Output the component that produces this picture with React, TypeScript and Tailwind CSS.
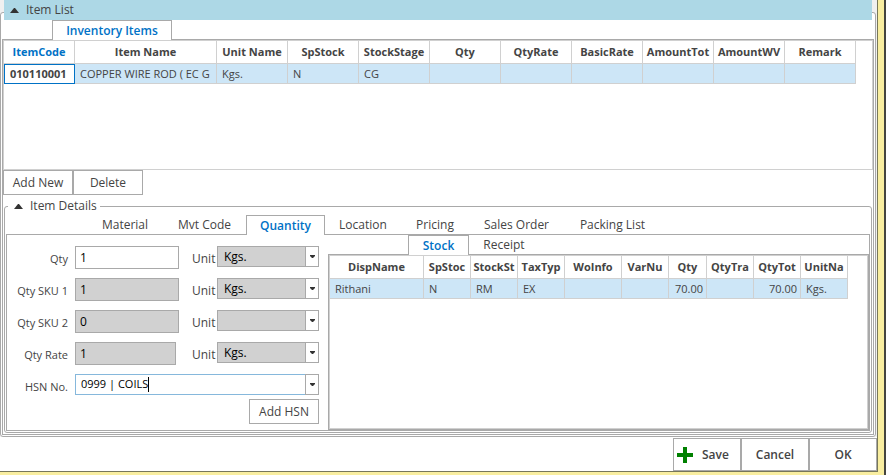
import React from 'react';

type Column = { name: string; width: string; align?: string };

const itemColumns: Column[] = [
  { name: 'ItemCode', width: 'w-[71px]' },
  { name: 'Item Name', width: 'w-[142px]' },
  { name: 'Unit Name', width: 'w-[71px]' },
  { name: 'SpStock', width: 'w-[71px]' },
  { name: 'StockStage', width: 'w-[71px]' },
  { name: 'Qty', width: 'w-[71px]' },
  { name: 'QtyRate', width: 'w-[71px]' },
  { name: 'BasicRate', width: 'w-[71px]' },
  { name: 'AmountTot', width: 'w-[71px]' },
  { name: 'AmountWV', width: 'w-[71px]' },
  { name: 'Remark', width: 'w-[71px]' },
];

const itemRow = ['010110001', 'COPPER WIRE ROD ( EC G', 'Kgs.', 'N', 'CG', '', '', '', '', '', ''];

const stockColumns: Column[] = [
  { name: 'DispName', width: 'w-[94px]' },
  { name: 'SpStoc', width: 'w-[47px]' },
  { name: 'StockSt', width: 'w-[47px]' },
  { name: 'TaxTyp', width: 'w-[47px]' },
  { name: 'WoInfo', width: 'w-[57px]' },
  { name: 'VarNu', width: 'w-[47px]' },
  { name: 'Qty', width: 'w-[38px]', align: 'text-right' },
  { name: 'QtyTra', width: 'w-[47px]' },
  { name: 'QtyTot', width: 'w-[47px]', align: 'text-right' },
  { name: 'UnitNa', width: 'w-[47px]' },
];

const stockRow = ['Rithani', 'N', 'RM', 'EX', '', '', '70.00', '', '70.00', 'Kgs.'];

const detailTabs = [
  { name: 'Material', width: 'w-[76px]' },
  { name: 'Mvt Code', width: 'w-[83px]' },
  { name: 'Quantity', width: 'w-[79px]' },
  { name: 'Location', width: 'w-[76px]' },
  { name: 'Pricing', width: 'w-[68px]' },
  { name: 'Sales Order', width: 'w-[95px]' },
  { name: 'Packing List', width: 'w-[97px]' },
];

const quantityRows = [
  { id: 'qty', label: 'Qty', value: '1', unit: 'Kgs.', input: 'w-[104px] bg-white' },
  { id: 'sku1', label: 'Qty SKU 1', value: '1', unit: 'Kgs.', input: 'w-[104px] bg-[#d1d1d1]' },
  { id: 'sku2', label: 'Qty SKU 2', value: '0', unit: '', input: 'w-[104px] bg-[#d1d1d1]' },
  { id: 'rate', label: 'Qty Rate', value: '1', unit: 'Kgs.', input: 'w-[101px] bg-[#d1d1d1]' },
];

function Expander({ title }: { title: string }) {
  return (
    <button type="button" className="flex items-center gap-[7px] whitespace-nowrap">
      <svg width="9" height="5" viewBox="0 0 9 5" aria-hidden="true">
        <path d="M4 0h1l4 5H0z" fill="#333" />
      </svg>
      {title}
    </button>
  );
}

function Tab({ name, width, active }: { name: string; width: string; active?: boolean }) {
  return (
    <button
      type="button"
      role="tab"
      aria-selected={!!active}
      className={`h-5 shrink-0 whitespace-nowrap text-center ${width} ${
        active ? 'relative border border-b-0 border-[#a9a9a9] bg-white font-semibold text-[#0072c6]' : 'text-[#444]'
      }`}
    >
      {name}
    </button>
  );
}

function Grid({ columns, row, focusFirst }: { columns: Column[]; row: string[]; focusFirst?: boolean }) {
  return (
    <table className="w-px table-fixed border-separate border-spacing-0 text-[11px]">
      <thead>
        <tr className="h-[23px]">
          {columns.map((c, i) => (
            <th
              key={c.name}
              className={`overflow-hidden whitespace-nowrap border-r border-b border-[#d0d0d0] p-0 text-center font-bold ${c.width} ${
                focusFirst && i === 0 ? 'text-[#0072c6]' : ''
              }`}
            >
              {c.name}
            </th>
          ))}
        </tr>
      </thead>
      <tbody>
        <tr className="h-5">
          {row.map((value, i) => (
            <td
              key={columns[i].name}
              className={`overflow-hidden whitespace-nowrap border-r border-b border-[#d0d0d0] p-0 leading-4 ${columns[i].align ?? ''} ${
                focusFirst && i === 0
                  ? 'bg-white pl-[6px] font-bold outline-1 -outline-offset-1 outline-[#0072c6]'
                  : 'bg-[#cde6f7] pl-[5px]'
              } ${columns[i].align ? 'pr-[3px]' : ''}`}
            >
              {value}
            </td>
          ))}
        </tr>
      </tbody>
    </table>
  );
}

function DropArrow() {
  return (
    <svg width="5" height="3" viewBox="0 0 5 3" aria-hidden="true">
      <path d="M0 0h5v1L3 3H2L0 1z" fill="#333" />
    </svg>
  );
}

function UnitSelect({ id, value }: { id: string; value: string }) {
  return (
    <div className="relative h-[21px] w-[102px] shrink-0">
      <select
        id={id}
        defaultValue={value}
        className="h-full w-full appearance-none border border-[#a9a9a9] bg-[#d1d1d1] pl-[6px] text-black outline-none"
      >
        <option value={value}>{value}</option>
      </select>
      <span className="pointer-events-none absolute inset-y-0 right-0 flex w-[14px] items-center justify-center border border-[#a9a9a9] bg-white">
        <DropArrow />
      </span>
    </div>
  );
}

function QuantityForm() {
  return (
    <form className="w-[321px] shrink-0 pt-[11px] pr-[9px] pb-[6px]">
      {quantityRows.map((r) => (
        <div key={r.id} className="flex h-8 items-start">
          <label htmlFor={r.id} className="w-[68px] shrink-0 pt-[5px] pr-[7px] text-right text-[11px]">
            {r.label}
          </label>
          <input
            id={r.id}
            defaultValue={r.value}
            className={`h-[23px] border border-[#a9a9a9] px-1 text-black outline-none ${r.input}`}
          />
          <label htmlFor={`${r.id}-unit`} className="ml-auto w-[25px] pt-[5px]">
            Unit
          </label>
          <UnitSelect id={`${r.id}-unit`} value={r.unit} />
        </div>
      ))}
      <div className="flex items-start">
        <label htmlFor="hsn" className="w-[68px] shrink-0 pt-[5px] pr-[7px] text-right text-[11px]">
          HSN No.
        </label>
        <div className="flex h-[21px] flex-1">
          <div className="flex flex-1 items-center border border-r-0 border-[#86b8dc] pb-px pl-[5px]">
            <input id="hsn" defaultValue="0999 | COILS" className="field-sizing-content text-[11px] text-black outline-none" />
            <span className="h-[15px] w-px bg-black" />
          </div>
          <button
            type="button"
            aria-label="Show HSN numbers"
            className="flex w-[14px] items-center justify-center border border-[#a9a9a9]"
          >
            <DropArrow />
          </button>
        </div>
      </div>
      <div className="mt-1 flex justify-end">
        <button type="button" className="h-[25px] w-[70px] border border-[#a9a9a9]">
          Add HSN
        </button>
      </div>
    </form>
  );
}

export default function App() {
  return (
    <div className="flex min-h-screen flex-col border-r-2 border-[#45453f] bg-[#f9eea0] pr-[6px] pb-[3px] font-['Open_Sans','Noto_Sans',sans-serif] text-[12px] leading-4 text-[#444]">
      <main className="flex flex-1 flex-col border-r border-b border-[#77775a] bg-white">
        <div className="flex flex-1 flex-col bg-[#f0f0f0] pt-3 pr-px">
          <section className="flex flex-1 flex-col rounded-[3px] border border-[#a9a9a9] bg-white">
            <header className="relative mx-[3px] -mt-[13px] flex h-5 items-center bg-[#add8e6] pl-[6px]">
              <Expander title="Item List" />
            </header>
            <div role="tablist" className="-mb-px flex pl-[51px]">
              <Tab name="Inventory Items" width="w-[120px]" active />
            </div>
            <div className="m-px mt-0 flex flex-1 flex-col border border-[#a9a9a9]">
              <div className="min-h-[130px] border border-[#d0d0d0]">
                <Grid columns={itemColumns} row={itemRow} focusFirst />
              </div>
              <div className="flex">
                <button type="button" className="h-[25px] w-[70px] border border-[#a9a9a9]">
                  Add New
                </button>
                <button type="button" className="h-[25px] w-[70px] border border-[#a9a9a9]">
                  Delete
                </button>
              </div>
              <fieldset className="mx-px mt-[2px] mb-px min-w-0 flex-1 rounded-[3px] border border-[#a9a9a9] px-px pb-px">
                <legend className="ml-[2px] flex h-[18px] w-[92px] items-center pl-[6px]">
                  <Expander title="Item Details" />
                </legend>
                <div role="tablist" className="-mb-px flex pl-[81px]">
                  {detailTabs.map((t) => (
                    <Tab key={t.name} name={t.name} width={t.width} active={t.name === 'Quantity'} />
                  ))}
                </div>
                <div className="flex border border-[#a9a9a9]">
                  <QuantityForm />
                  <div className="flex min-w-0 flex-1 flex-col">
                    <div role="tablist" className="-mb-px flex pl-[80px]">
                      <Tab name="Stock" width="w-[61px]" active />
                      <Tab name="Receipt" width="w-[70px]" />
                    </div>
                    <div className="flex-1 border border-[#a9a9a9]">
                      <div className="h-full border border-[#d0d0d0]">
                        <Grid columns={stockColumns} row={stockRow} />
                      </div>
                    </div>
                  </div>
                </div>
              </fieldset>
            </div>
          </section>
        </div>
        <footer className="flex justify-end pt-px">
          <button
            type="button"
            className="flex h-[33px] w-[68px] items-center gap-[9px] border border-[#a9a9a9] pl-[3px] font-semibold"
          >
            <svg width="16" height="16" viewBox="0 0 16 16" aria-hidden="true">
              <path d="M6 0h4v6h6v4h-6v6H6v-6H0V6h6z" fill="#008000" />
            </svg>
            Save
          </button>
          <button type="button" className="h-[33px] w-[68px] border border-[#a9a9a9] font-semibold">
            Cancel
          </button>
          <button type="button" className="h-[33px] w-[68px] border border-[#a9a9a9] font-semibold">
            OK
          </button>
        </footer>
      </main>
    </div>
  );
}
